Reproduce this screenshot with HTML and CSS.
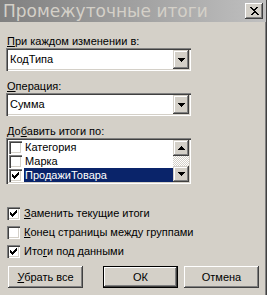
FILE: index.html
```html
<!DOCTYPE html>
<html lang="ru">
<head>
<meta charset="utf-8">
<title>Промежуточные итоги</title>
<link rel="stylesheet" href="styles.css">
</head>
<body>
<div class="dialog">
  <div class="titlebar">
    <span class="title">Промежуточные итоги</span>
    <span class="close">
      <svg width="10" height="9" viewBox="0 0 10 9" shape-rendering="crispEdges"><path d="M1 0h2v1h1v1h2v-1h1v-1h2v1h-1v1h-1v1h-1v1h1v1h1v1h1v1h1v1h-2v-1h-1v-1h-2v1h-1v1h-2v-1h1v-1h1v-1h1v-1h-1v-1h-1v-1h-1z" fill="#000"/></svg>
    </span>
  </div>
  <div class="content">
    <div class="label"><u>П</u>ри каждом изменении в:</div>
    <div class="combo">
      <span class="combo-value">КодТипа</span>
      <span class="sbtn"><svg width="7" height="4" viewBox="0 0 7 4" shape-rendering="crispEdges"><path d="M0 0h7v1h-1v1h-1v1h-1v1h-1v-1h-1v-1h-1v-1h-1z" fill="#000"/></svg></span>
    </div>
    <div class="label gap"><u>О</u>перация:</div>
    <div class="combo">
      <span class="combo-value">Сумма</span>
      <span class="sbtn"><svg width="7" height="4" viewBox="0 0 7 4" shape-rendering="crispEdges"><path d="M0 0h7v1h-1v1h-1v1h-1v1h-1v-1h-1v-1h-1v-1h-1z" fill="#000"/></svg></span>
    </div>
    <div class="label gap">До<u>б</u>авить итоги по:</div>
    <div class="listbox">
      <div class="items">
        <div class="item"><span class="cb"></span><span class="item-text">Категория</span></div>
        <div class="item"><span class="cb"></span><span class="item-text">Марка</span></div>
        <div class="item selected"><span class="cb"><svg width="7" height="7" viewBox="0 0 7 7" shape-rendering="crispEdges"><path d="M0 2h1v3h-1zM1 3h1v3h-1zM2 4h1v3h-1zM3 3h1v3h-1zM4 2h1v3h-1zM5 1h1v3h-1zM6 0h1v3h-1z" fill="#000"/></svg></span><span class="item-text">ПродажиТовара</span></div>
      </div>
      <div class="scrollbar">
        <span class="sbtn"><svg width="7" height="4" viewBox="0 0 7 4" shape-rendering="crispEdges"><path d="M3 0h1v1h1v1h1v1h1v1h-7v-1h1v-1h1v-1h1z" fill="#000"/></svg></span>
        <span class="track"></span>
        <span class="sbtn"><svg width="7" height="4" viewBox="0 0 7 4" shape-rendering="crispEdges"><path d="M0 0h7v1h-1v1h-1v1h-1v1h-1v-1h-1v-1h-1v-1h-1z" fill="#000"/></svg></span>
      </div>
    </div>
    <div class="options">
      <div class="option"><span class="cb"><svg width="7" height="7" viewBox="0 0 7 7" shape-rendering="crispEdges"><path d="M0 2h1v3h-1zM1 3h1v3h-1zM2 4h1v3h-1zM3 3h1v3h-1zM4 2h1v3h-1zM5 1h1v3h-1zM6 0h1v3h-1z" fill="#000"/></svg></span><span><u>З</u>аменить текущие итоги</span></div>
      <div class="option"><span class="cb"></span><span><u>К</u>онец страницы между группами</span></div>
      <div class="option"><span class="cb"><svg width="7" height="7" viewBox="0 0 7 7" shape-rendering="crispEdges"><path d="M0 2h1v3h-1zM1 3h1v3h-1zM2 4h1v3h-1zM3 3h1v3h-1zM4 2h1v3h-1zM5 1h1v3h-1zM6 0h1v3h-1z" fill="#000"/></svg></span><span>Ито<u>г</u>и под данными</span></div>
    </div>
    <div class="buttons">
      <button class="btn"><u>У</u>брать все</button>
      <button class="btn default">ОК</button>
      <button class="btn">Отмена</button>
    </div>
  </div>
</div>
</body>
</html>
```

FILE: styles.css
```css
* { box-sizing: border-box; }

body {
  margin: 0;
  width: 267px;
  height: 295px;
  overflow: hidden;
  background: #d4d0c8;
  font-family: "Liberation Sans", Arial, sans-serif;
  font-size: 11px;
  color: #000;
}

u { text-decoration: underline; text-underline-offset: 1px; }

.dialog {
  height: 295px;
  display: flex;
  flex-direction: column;
  border-right: 1px solid #404040;
  box-shadow: inset -1px 0 #808080;
}

.titlebar {
  height: 22px;
  flex: none;
  display: flex;
  align-items: center;
  justify-content: space-between;
  padding: 0 3px 0 3px;
  background: linear-gradient(to right, #808080, #c0c0c0);
}

.title {
  font-family: "DejaVu Sans", sans-serif;
  font-size: 17px;
  line-height: 22px;
  color: #d4d0c8;
  white-space: nowrap;
}

.close {
  width: 18px;
  height: 16px;
  display: flex;
  align-items: center;
  justify-content: center;
  background: #d4d0c8;
  box-shadow: inset -1px -1px #404040, inset 1px 1px #fff, inset -2px -2px #808080;
}

.content {
  padding: 12px 0 0 6px;
  display: flex;
  flex-direction: column;
}

.label {
  line-height: 14px;
  padding-left: 1px;
}
.label.gap { margin-top: 8px; }

.combo {
  width: 185px;
  height: 23px;
  display: flex;
  align-items: center;
  justify-content: space-between;
  padding: 2px;
  background: #fff;
  box-shadow: inset 1px 1px #808080, inset 2px 2px #404040, inset -1px -1px #fff, inset -2px -2px #d4d0c8;
}

.combo-value { padding-left: 2px; line-height: 19px; }

.sbtn {
  width: 16px;
  height: 17px;
  display: flex;
  align-items: center;
  justify-content: center;
  background: #d4d0c8;
  box-shadow: inset -1px -1px #404040, inset 1px 1px #d4d0c8, inset -2px -2px #808080, inset 2px 2px #fff;
}
.combo .sbtn { height: 19px; }

.listbox {
  width: 185px;
  height: 46px;
  display: flex;
  padding: 2px;
  background: #fff;
  box-shadow: inset 1px 1px #808080, inset 2px 2px #404040, inset -1px -1px #fff, inset -2px -2px #d4d0c8;
}

.items { flex: 1; display: flex; flex-direction: column; }

.item {
  height: 14px;
  display: flex;
  align-items: center;
  padding-left: 1px;
}

.cb {
  width: 13px;
  height: 13px;
  flex: none;
  display: flex;
  align-items: center;
  justify-content: center;
  background: #fff;
  box-shadow: inset 1px 1px #808080, inset 2px 2px #404040, inset -1px -1px #fff, inset -2px -2px #d4d0c8;
}

.item-text {
  flex: 1;
  margin-left: 2px;
  padding-left: 1px;
  line-height: 14px;
}
.item.selected .item-text { background: #0a246a; color: #fff; }

.scrollbar {
  width: 16px;
  display: flex;
  flex-direction: column;
}
.scrollbar .sbtn { height: 16px; }
.track {
  flex: 1;
  background: repeating-conic-gradient(#fff 0 25%, #d4d0c8 0 50%) 0 0 / 2px 2px;
}

.options {
  margin-top: 23px;
  display: flex;
  flex-direction: column;
  gap: 6px;
}

.option {
  display: flex;
  align-items: center;
  gap: 4px;
  padding-left: 1px;
  height: 13px;
  line-height: 13px;
}

.buttons {
  margin-top: 8px;
  display: flex;
  padding-left: 2px;
}

.btn {
  width: 75px;
  height: 22px;
  padding: 0;
  border: none;
  font: inherit;
  color: #000;
  background: #d4d0c8;
  box-shadow: inset -1px -1px #404040, inset 1px 1px #fff, inset -2px -2px #808080, inset 2px 2px #d4d0c8;
}
.btn.default {
  margin-left: 20px;
  box-shadow: inset 0 0 0 1px #000, inset -2px -2px #404040, inset 2px 2px #fff, inset -3px -3px #808080;
}
.btn + .btn:not(.default) { margin-left: 6px; }
```
